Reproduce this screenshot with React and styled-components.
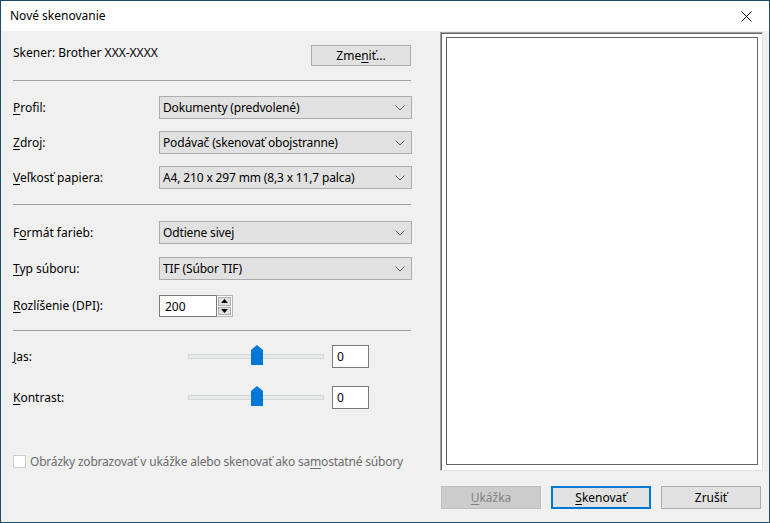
import React from "react";
import styled, { createGlobalStyle } from "styled-components";

const Global = createGlobalStyle`
  html, body { margin: 0; padding: 0; background: #1d4f6c; }
  body { font-family: "Segoe UI", "Noto Sans", "Open Sans", sans-serif; font-size: 12px; color: #000; }
  * { box-sizing: border-box; }
`;

const Window = styled.div`
  width: 770px;
  height: 523px;
  border: 1px solid #1b4e6b;
  background: #f0f0f0;
  display: flex;
  flex-direction: column;
  overflow: hidden;
`;

const TitleBar = styled.div`
  height: 30px;
  background: #fff;
  display: flex;
  align-items: center;
  justify-content: space-between;
  padding: 0 0 0 9px;
  flex: none;
`;

const Title = styled.span`
  font-size: 12px;
  line-height: 14px;
  padding-bottom: 1px;
`;

const CloseBox = styled.div`
  width: 46px;
  height: 30px;
  display: flex;
  align-items: center;
  justify-content: center;
`;

const Body = styled.div`
  flex: 1;
  display: flex;
`;

const LeftPane = styled.div`
  width: 439px;
  padding: 14px 0 0 12px;
  display: flex;
  flex-direction: column;
`;

const Inner = styled.div`
  width: 400px;
  display: flex;
  flex-direction: column;
`;

const ScannerRow = styled.div`
  display: flex;
  justify-content: space-between;
  align-items: flex-start;
  height: 20px;
  padding-right: 2px;
`;

const ScannerText = styled.span`
  line-height: 14px;
  margin-top: 1px;
`;

const Separator = styled.div`
  height: 1px;
  background: #a0a0a0;
  width: 398px;
  margin-top: ${(p) => p.$mt}px;
`;

const Row = styled.div`
  display: flex;
  align-items: center;
  margin-top: ${(p) => p.$mt}px;
  height: ${(p) => p.$h || 23}px;
`;

const Label = styled.span`
  width: 146px;
  flex: none;
  line-height: 14px;
`;

const U = styled.span`
  text-decoration: underline;
  text-underline-offset: 2px;
`;

const Select = styled.div`
  width: 253px;
  height: 23px;
  background: #e1e1e1;
  border: 1px solid #adadad;
  display: flex;
  align-items: center;
  justify-content: space-between;
  padding: 0 6px 0 3px;
  line-height: 14px;
  letter-spacing: -0.15px;
`;

const Spin = styled.div`
  display: flex;
  height: 22px;
`;

const SpinInput = styled.div`
  width: 57px;
  height: 22px;
  background: #fff;
  border: 1px solid #7a7a7a;
  border-right: none;
  padding: 0 5px;
  display: flex;
  align-items: center;
`;

const SpinButtons = styled.div`
  width: 17px;
  display: flex;
  flex-direction: column;
  border: 1px solid #b4b4b4;
  border-left: 1px solid #7a7a7a;
  background: #fff;
  padding: 1px;
  gap: 1px;
`;

const SpinBtn = styled.div`
  flex: 1;
  background: #e1e1e1;
  border: 1px solid #adadad;
  display: flex;
  align-items: center;
  justify-content: center;
`;

const SliderArea = styled.div`
  width: 173px;
  height: 23px;
  display: flex;
  align-items: center;
  padding-left: 29px;
  flex: none;
`;

const Track = styled.div`
  position: relative;
  width: 136px;
  height: 5px;
  background: #e7eaea;
  border: 1px solid #d6d6d6;
`;

const Thumb = styled.svg`
  position: absolute;
  left: ${(p) => p.$left}px;
  top: -10px;
`;

const ValueBox = styled.div`
  width: 37px;
  height: 23px;
  background: #fff;
  border: 1px solid #7a7a7a;
  padding: 0 4px;
  display: flex;
  align-items: center;
`;

const CheckRow = styled.div`
  display: flex;
  align-items: center;
  margin-top: ${(p) => p.$mt}px;
  color: #6d6d6d;
  gap: 4px;
  white-space: nowrap;
  letter-spacing: -0.2px;
`;

const CheckBox = styled.div`
  width: 13px;
  height: 13px;
  flex: none;
  border: 1px solid #cccccc;
  background: #fff;
`;

const RightPane = styled.div`
  width: 324px;
  padding-top: 1px;
  display: flex;
  flex-direction: column;
`;

const Preview = styled.div`
  height: 439px;
  width: 323px;
  border-top: 1px solid #a0a0a0;
  border-left: 1px solid #a0a0a0;
  border-right: 1px solid #e3e3e3;
  border-bottom: 1px solid #e3e3e3;
  box-shadow: inset 1px 1px 0 #696969, inset -1px -1px 0 #fff;
  background: #fff;
  padding: 4px 4px 5px 5px;
`;

const PreviewInner = styled.div`
  width: 100%;
  height: 100%;
  border: 1px solid #646464;
`;

const Buttons = styled.div`
  display: flex;
  gap: 10px;
  margin-top: 15px;
  padding-left: 1px;
`;

const Button = styled.div`
  display: flex;
  align-items: center;
  justify-content: center;
  background: ${(p) => (p.$disabled ? "#cccccc" : "#e1e1e1")};
  border: ${(p) => (p.$default ? "2px solid #0078d7" : p.$disabled ? "1px solid #bfbfbf" : "1px solid #adadad")};
  color: ${(p) => (p.$disabled ? "#838383" : "#000")};
  line-height: 14px;
  width: ${(p) => p.$w || 100}px;
  height: ${(p) => p.$h || 23}px;
`;

const Chevron = () => (
  <svg width="10" height="6" viewBox="0 0 10 6">
    <path d="M0.5 0.5 L5 5 L9.5 0.5" fill="none" stroke="#606060" strokeWidth="1" />
  </svg>
);

const SelectBox = ({ children }) => (
  <Select>
    <span>{children}</span>
    <Chevron />
  </Select>
);

const Slider = () => (
  <SliderArea>
    <Track>
      <Thumb $left={62} width="12" height="20" viewBox="0 0 12 20">
        <path d="M0 5 L6 0 L12 5 L12 20 L0 20 Z" fill="#0078d7" />
      </Thumb>
    </Track>
  </SliderArea>
);

export default function App() {
  return (
    <>
      <Global />
      <Window>
        <TitleBar>
          <Title>Nové skenovanie</Title>
          <CloseBox>
            <svg width="11" height="11" viewBox="0 0 11 11">
              <path d="M0.5 0.5 L10.5 10.5 M10.5 0.5 L0.5 10.5" stroke="#000" strokeWidth="1" />
            </svg>
          </CloseBox>
        </TitleBar>
        <Body>
          <LeftPane>
            <Inner>
              <ScannerRow>
                <ScannerText>Skener: Brother XXX-XXXX</ScannerText>
                <Button $h={21}>
                  <span>
                    Zme<U>n</U>iť...
                  </span>
                </Button>
              </ScannerRow>
              <Separator $mt={15} />
              <Row $mt={15}>
                <Label>
                  <U>P</U>rofil:
                </Label>
                <SelectBox>Dokumenty (predvolené)</SelectBox>
              </Row>
              <Row $mt={12}>
                <Label>
                  <U>Z</U>droj:
                </Label>
                <SelectBox>Podávač (skenovať obojstranne)</SelectBox>
              </Row>
              <Row $mt={12}>
                <Label>
                  <U>V</U>eľkosť papiera:
                </Label>
                <SelectBox>A4, 210 x 297 mm (8,3 x 11,7 palca)</SelectBox>
              </Row>
              <Separator $mt={15} />
              <Row $mt={16}>
                <Label>
                  F<U>o</U>rmát farieb:
                </Label>
                <SelectBox>Odtiene sivej</SelectBox>
              </Row>
              <Row $mt={13}>
                <Label>
                  <U>T</U>yp súboru:
                </Label>
                <SelectBox>TIF (Súbor TIF)</SelectBox>
              </Row>
              <Row $mt={15} $h={22}>
                <Label>
                  <U>R</U>ozlíšenie (DPI):
                </Label>
                <Spin>
                  <SpinInput>200</SpinInput>
                  <SpinButtons>
                    <SpinBtn>
                      <svg width="7" height="4" viewBox="0 0 7 4">
                        <path d="M0 4 L3.5 0 L7 4 Z" fill="#000" />
                      </svg>
                    </SpinBtn>
                    <SpinBtn>
                      <svg width="7" height="4" viewBox="0 0 7 4">
                        <path d="M0 0 L3.5 4 L7 0 Z" fill="#000" />
                      </svg>
                    </SpinBtn>
                  </SpinButtons>
                </Spin>
              </Row>
              <Separator $mt={13} />
              <Row $mt={14}>
                <Label>
                  <U>J</U>as:
                </Label>
                <Slider />
                <ValueBox>0</ValueBox>
              </Row>
              <Row $mt={18}>
                <Label>
                  <U>K</U>ontrast:
                </Label>
                <Slider />
                <ValueBox>0</ValueBox>
              </Row>
              <CheckRow $mt={44}>
                <CheckBox />
                <span>
                  Obrázky zobrazovať v ukážke alebo skenovať ako sa<U>m</U>ostatné súbory
                </span>
              </CheckRow>
            </Inner>
          </LeftPane>
          <RightPane>
            <Preview>
              <PreviewInner />
            </Preview>
            <Buttons>
              <Button $disabled>
                <span>
                  <U>U</U>kážka
                </span>
              </Button>
              <Button $default>
                <span>
                  <U>S</U>kenovať
                </span>
              </Button>
              <Button>Zrušiť</Button>
            </Buttons>
          </RightPane>
        </Body>
      </Window>
    </>
  );
}
